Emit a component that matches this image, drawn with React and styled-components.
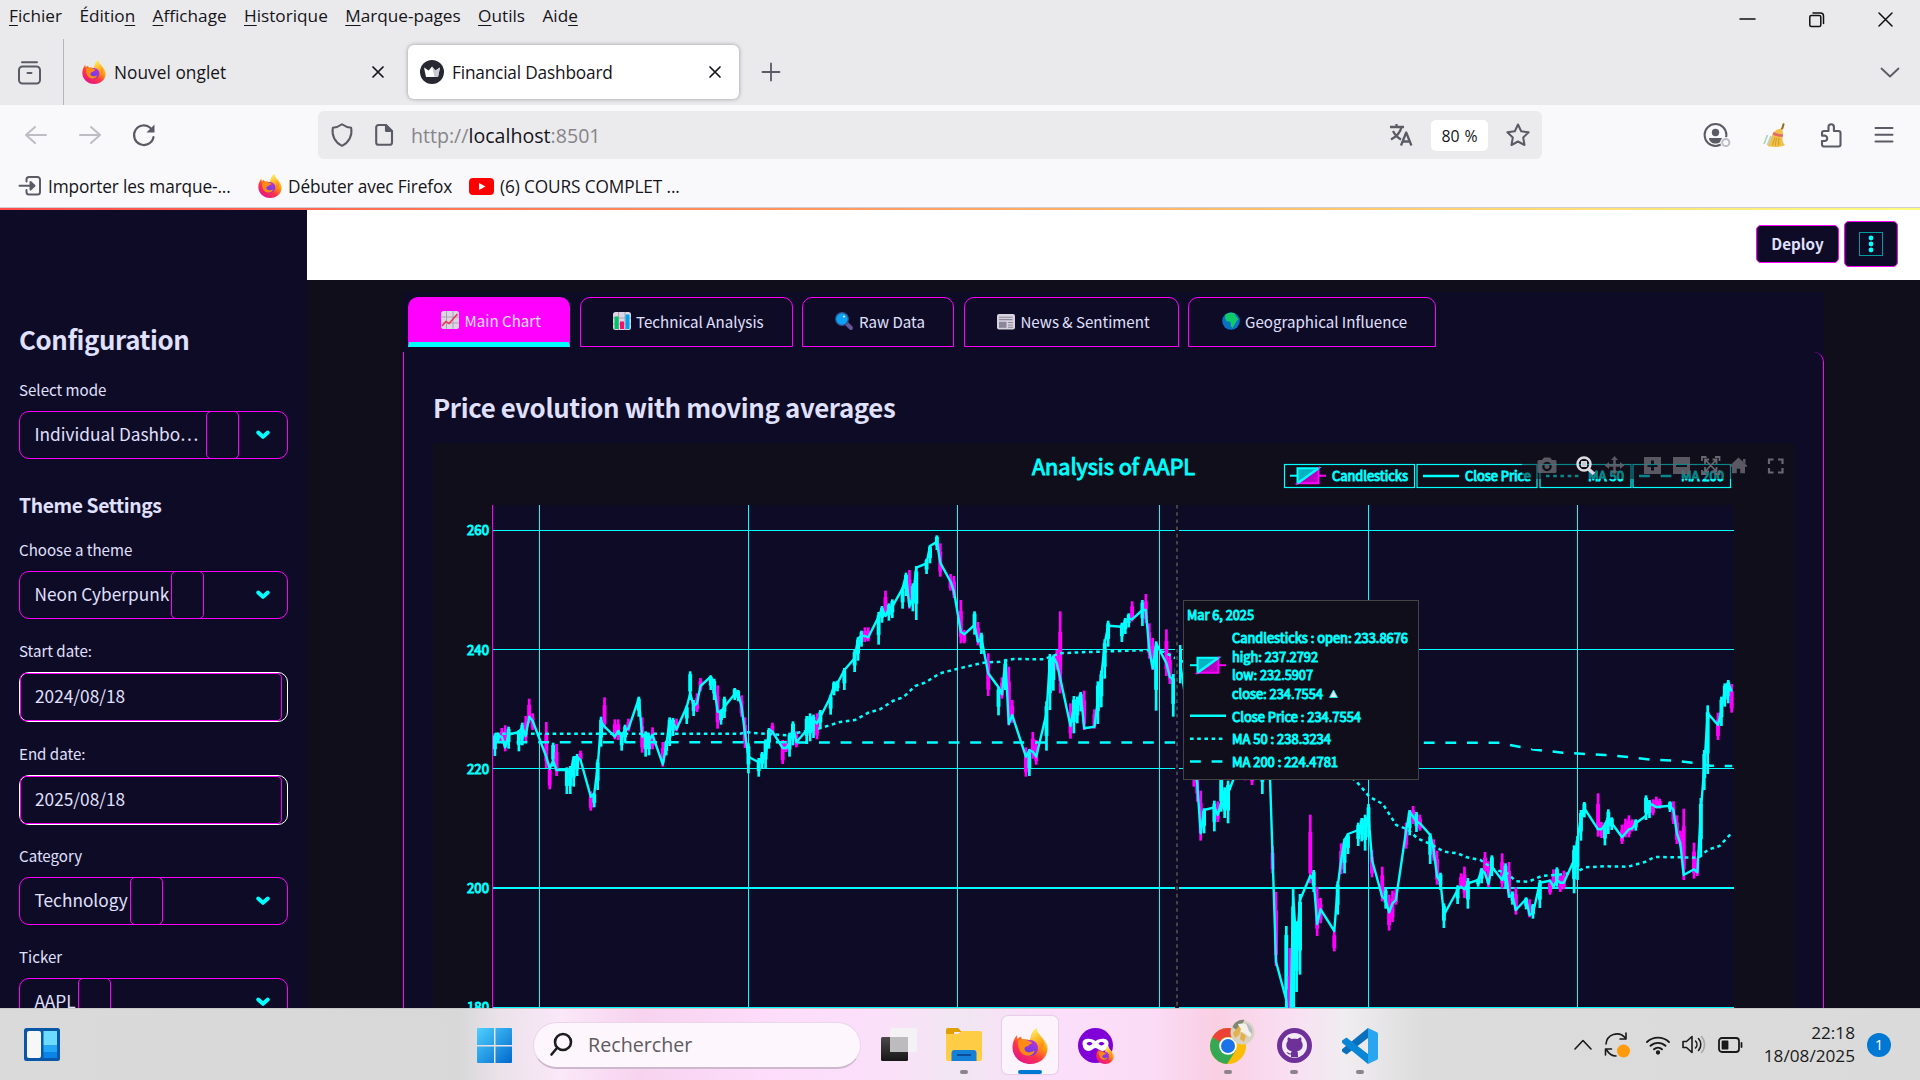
import React from "react";
import styled, { createGlobalStyle, css } from "styled-components";

const UI = '"Open Sans", "Noto Sans", sans-serif';
const APP = '"Noto Sans CJK SC", "Noto Sans", sans-serif';
const CYAN = "#00ffff";
const PINK = "#ff00ff";
const NAVY = "#0e0b26";
const DARK = "#100e1a";
const LAVENDER = "#e0e0ff";

const Global = createGlobalStyle`
  *{box-sizing:border-box}
  html,body{margin:0;padding:0;overflow:hidden;background:${DARK}}
  svg{display:block;flex:none;overflow:visible}
`;

const Screen = styled.div`
  width: 1920px;
  height: 1080px;
  display: flex;
  flex-direction: column;
  overflow: hidden;
  font-family: ${UI};
`;

/* ---------- browser chrome ---------- */
const TitleArea = styled.header`
  height: 105px;
  background: #eaeaec;
  display: flex;
  flex-direction: column;
`;
const MenuRow = styled.div`
  height: 39px;
  display: flex;
  justify-content: space-between;
`;
const Menus = styled.nav`
  display: flex;
  gap: 17.4px;
  padding: 2px 0 0 9px;
  font-size: 17.2px;
  line-height: 27px;
  height: 29px;
  color: #15141a;
`;
const Menu = styled.span`
  white-space: pre;
  u {
    text-underline-offset: 3px;
    text-decoration-thickness: 1px;
  }
`;
const WindowButtons = styled.div`
  display: flex;
  gap: 54px;
  padding: 12px 27px 0 0;
`;
const TabStrip = styled.div`
  height: 66px;
  display: flex;
  align-items: center;
`;
const RecentButton = styled.div`
  width: 64px;
  height: 66px;
  padding: 21px 0 0 17px;
  border-right: 1px solid #b5b5ba;
`;
const BrowserTab = styled.div`
  width: ${(p) => (p.$active ? 331 : 338)}px;
  height: 54px;
  display: flex;
  align-items: center;
  margin-left: ${(p) => (p.$active ? 6 : 0)}px;
  padding: 0 18px 0 ${(p) => (p.$active ? 12 : 18)}px;
  border-radius: 6px;
  font-size: 17.25px;
  letter-spacing: ${(p) => (p.$active ? -0.18 : 0.05)}px;
  color: #15141a;
  ${(p) =>
    p.$active &&
    css`
      background: #fff;
      box-shadow: 0 0 4px rgba(0, 0, 0, 0.35);
    `}
`;
const TabTitle = styled.span`
  flex: 1;
  margin-left: 8px;
  white-space: nowrap;
`;
const NewTab = styled.div`
  margin-left: 23px;
  flex: 1;
`;
const AllTabs = styled.div`
  margin-right: 20px;
`;
const NavBar = styled.div`
  height: 60px;
  background: #f9f9fb;
  display: flex;
  align-items: center;
  padding: 0 26px 0 24px;
`;
const NavButtons = styled.div`
  display: flex;
  gap: 30px;
  width: 294px;
`;
const UrlBar = styled.div`
  width: 1224px;
  height: 48px;
  border-radius: 6px;
  background: #ebebed;
  display: flex;
  align-items: center;
  padding: 0 12px 0 13px;
`;
const DocSlot = styled.span`
  margin-left: 22px;
`;
const Url = styled.span`
  flex: 1;
  margin-left: 18px;
  padding-top: 1px;
  font-size: 19.6px;
  color: #85858a;
  b {
    font-weight: 400;
    color: #15141a;
  }
`;
const ZoomPill = styled.span`
  width: 57px;
  height: 31px;
  margin: 0 18px 0 18px;
  border-radius: 5px;
  background: #fff;
  color: #15141a;
  font-size: 15.8px;
  line-height: 32px;
  word-spacing: 1px;
  text-align: center;
`;
const NavTools = styled.div`
  flex: 1;
  display: flex;
  justify-content: flex-end;
  align-items: center;
  gap: 32px;
`;
const BookmarkBar = styled.div`
  height: 43px;
  background: #f9f9fb;
  border-bottom: 1px solid #cfcfd6;
  display: flex;
  align-items: center;
  padding-left: 18px;
  font-size: 17.25px;
  letter-spacing: -0.12px;
  color: #15141a;
`;
const Bookmark = styled.div`
  display: flex;
  align-items: center;
  gap: 6px;
  width: ${(p) => p.$w}px;
  white-space: nowrap;
`;

/* ---------- app ---------- */
const Decoration = styled.div`
  height: 2px;
  background: linear-gradient(90deg, #ff4b4b, #fffd80);
`;
const AppBody = styled.div`
  height: 798px;
  display: flex;
  overflow: hidden;
  font-family: ${APP};
  color: ${LAVENDER};
`;
const Sidebar = styled.aside`
  width: 307px;
  height: 798px;
  overflow: hidden;
  background: ${NAVY};
  padding: 111px 19px 0;
`;
const SideTitle = styled.h2`
  margin: 0 0 21px 0;
  height: 36px;
  font-size: 25.8px;
  line-height: 36px;
  font-weight: 600;
  letter-spacing: -0.4px;
`;
const SideSubtitle = styled.h3`
  margin: 31px 0 20px;
  height: 28px;
  font-size: 19.3px;
  line-height: 30px;
  font-weight: 600;
  letter-spacing: -0.38px;
`;
const Field = styled.div`
  margin-bottom: ${(p) => p.$after ?? 20}px;
`;
const Label = styled.label`
  display: block;
  height: 24px;
  margin-bottom: 9px;
  line-height: 23px;
  font-size: 15.1px;
`;
const SelectBox = styled.div`
  width: 269px;
  height: 48px;
  display: flex;
  align-items: center;
  border: 1px solid ${PINK};
  border-radius: 10px;
  padding-right: 17px;
`;
const SelectText = styled.span`
  width: ${(p) => p.$w}px;
  padding: 0 0 2px 14.5px;
  font-size: 17.25px;
  line-height: 30px;
  white-space: nowrap;
`;
const SelectCaret = styled.span`
  width: 33px;
  height: 48px;
  flex: none;
  margin: -1px auto -1px 0;
  border: 1px solid ${PINK};
  border-radius: 5px;
`;
const DateBox = styled.div`
  width: 269px;
  height: 50px;
  border: 1px solid #fff;
  border-radius: 10px;
  padding-right: 5px;
`;
const DateInput = styled.div`
  height: 48px;
  border: 1px solid ${PINK};
  border-radius: 5px;
  padding: 0 0 0 14px;
  font-size: 17.25px;
  line-height: 44px;
`;
const Main = styled.main`
  flex: 1;
  background: ${DARK};
  display: flex;
  flex-direction: column;
`;
const AppHeader = styled.div`
  height: 70px;
  flex: none;
  background: #fff;
  display: flex;
  justify-content: flex-end;
  align-items: center;
  gap: 5px;
  padding: 0 22px 2px 0;
`;
const HeaderButton = styled.div`
  width: ${(p) => p.$w}px;
  height: ${(p) => p.$h}px;
  display: flex;
  align-items: center;
  justify-content: center;
  background: ${NAVY};
  border: 1.5px solid ${PINK};
  border-radius: 5px;
  font-size: 15.2px;
  line-height: 20px;
  font-weight: 700;
  padding-bottom: ${(p) => (p.$icon ? 0 : 2)}px;
`;
const Block = styled.section`
  width: 1421px;
  margin: 12px 0 0 96px;
  padding-top: 5px;
  background: ${NAVY};
`;
const TabList = styled.div`
  display: flex;
  gap: 9.6px;
  padding-left: 5px;
  height: 55px;
`;
const AppTab = styled.div`
  width: ${(p) => p.$w}px;
  height: 50px;
  flex: none;
  display: flex;
  align-items: center;
  justify-content: center;
  gap: 5.5px;
  border: 1px solid ${PINK};
  border-radius: 10px 10px 0 0;
  font-size: 15.1px;
  line-height: 20px;
  white-space: nowrap;
  padding: 0 0 2px 4px;
  ${(p) =>
    p.$active &&
    css`
      background: ${PINK};
      border-bottom: 5px solid ${CYAN};
      padding-bottom: 0;
    `}
`;
const Panel = styled.div`
  height: 656px;
  border: 1px solid ${PINK};
  border-top: 0;
  border-bottom: 0;
  border-radius: 0 10px 0 0;
  padding: 37px 0 0 29px;
`;
const PanelTitle = styled.h2`
  margin: 0;
  height: 54px;
  font-size: 25.8px;
  line-height: 36px;
  font-weight: 600;
  letter-spacing: -0.36px;
  white-space: nowrap;
`;

/* ---------- taskbar ---------- */
const Taskbar = styled.footer`
  height: 72px;
  display: flex;
  align-items: center;
  border-top: 1px solid #cbc8c9;
  background: linear-gradient(
    90deg,
    #dadada 0,
    #d8d8d8 460px,
    #ebe2ea 500px,
    #fae8f8 560px,
    #f7d3ef 640px,
    #fcdcfa 760px,
    #fbe0fa 880px,
    #f1e6f1 960px,
    #fbdffa 1040px,
    #fbdcf7 1150px,
    #f9cfe3 1215px,
    #f9dff3 1290px,
    #f0edf0 1345px,
    #dcdcdc 1425px,
    #dadada 1920px
  );
`;
const TaskSlot = styled.div`
  width: ${(p) => p.$w}px;
  height: 71px;
  flex: none;
  display: flex;
  flex-direction: column;
  align-items: center;
  padding-top: ${(p) => p.$top ?? 19}px;
`;
const ActiveTile = styled.div`
  width: 56px;
  height: 58px;
  display: flex;
  flex-direction: column;
  align-items: center;
  justify-content: space-between;
  padding-top: 12px;
  border-radius: 6px;
  background: #fdf3fd;
  box-shadow: 0 0 1px 1px rgba(120, 90, 120, 0.14);
`;
const Indicator = styled.span`
  width: ${(p) => (p.$active ? 24 : 8)}px;
  height: ${(p) => (p.$active ? 4 : 4)}px;
  margin-top: ${(p) => (p.$active ? 0 : "auto")};
  margin-bottom: ${(p) => (p.$active ? 0 : 6)}px;
  border-radius: 3px;
  background: ${(p) => (p.$active ? "#0078d4" : "#8b848c")};
`;
const Search = styled.div`
  width: 328px;
  height: 47px;
  flex: none;
  display: flex;
  align-items: center;
  gap: 16px;
  margin: 1px 5px 0 10px;
  padding: 0 0 0 16px;
  border-radius: 24px;
  border: 1px solid #ead6ea;
  border-bottom: 2px solid #cdb9cd;
  background: #fdf6fd;
  font-size: 19.7px;
  color: #5f5b60;
`;
const Tray = styled.div`
  flex: 1;
  display: flex;
  justify-content: flex-end;
  align-items: center;
  gap: 12px;
  padding-right: 29px;
`;
const WifiSlot = styled.span`
  margin-left: 4px;
`;
const Clock = styled.div`
  width: 100px;
  padding-bottom: 2px;
  text-align: right;
  font-size: 17.2px;
  line-height: 23px;
  color: #1a1a1a;
`;
const Notice = styled.span`
  width: 24px;
  height: 24px;
  border-radius: 50%;
  background: #0078d4;
  color: #fff;
  font-size: 15px;
  line-height: 23px;
  text-align: center;
`;

/* ---------- icons ---------- */
const Line = ({ w, h, c = "#5b5b66", s = 2, children, vb }) => (
  <svg width={w} height={h} viewBox={vb || `0 0 ${w} ${h}`} fill="none" stroke={c} strokeWidth={s} strokeLinecap="round" strokeLinejoin="round">
    {children}
  </svg>
);

const Firefox = ({ size, id }) => (
  <svg width={size} height={size} viewBox="0 0 36 36">
    <defs>
      <linearGradient id={`${id}a`} x1=".8" y1=".1" x2=".25" y2=".95">
        <stop offset="0" stopColor="#fff44f" />
        <stop offset=".35" stopColor="#ff980e" />
        <stop offset=".65" stopColor="#ff3647" />
        <stop offset="1" stopColor="#e31587" />
      </linearGradient>
      <linearGradient id={`${id}b`} x1=".7" y1="0" x2=".3" y2="1">
        <stop offset="0" stopColor="#b833e1" />
        <stop offset="1" stopColor="#5b3ee0" />
      </linearGradient>
      <linearGradient id={`${id}c`} x1=".3" y1="0" x2=".6" y2="1">
        <stop offset="0" stopColor="#fff36a" />
        <stop offset=".6" stopColor="#ffb01f" />
        <stop offset="1" stopColor="#ff7a1a" />
      </linearGradient>
    </defs>
    <path fill={`url(#${id}a)`} d="M5.2 6.8C5 8.6 5.100 9.500 5.600 11 6.600 9.900 7.500 9.200 9 8.500c.2 1.300.8 2.200 1.800 3 3-.6 5.200-.3 7.500 1C18.500 8 20 3.500 24.500 0c.2 4 2.500 6.300 5.200 9.500C33 13 35.500 16 35.500 21 35 29.500 28 36 18.500 36 8 36 .5 28.500.5 19.500.5 14.500 2.200 10.400 5.200 6.800z" />
    <path fill={`url(#${id}c)`} d="M24.500 0c-3.800 3-5.500 7-5.800 12 4.800 2.200 7.300 5.500 7.500 10.500C31 20 33.500 16.500 31.500 12 30 8 25 5.500 24.500 0z" />
    <circle cx="18" cy="20" r="8" fill={`url(#${id}b)`} />
    <path fill="#ff8a16" d="M6 13c3-2.500 7-2.300 9.500-.2 2 .2 3.800 1 4.800 2.400-1.500.2-2.600 1-3.400 2-1.200 1.400-3.700.8-4.300 3-.4 2 1.600 4.200 4.600 4.200 2.600 0 3.600-1.700 5.400-1.200-1 3.600-5.400 5.300-9.200 4C8 25.500 5.500 20 6 13z" />
  </svg>
);

const Recent = () => (
  <Line w={25} h={25}>
    <path d="M5 2.200h15" />
    <rect x="2" y="6.500" width="21" height="17" rx="3.500" />
    <path d="M10.500 13h4" />
  </Line>
);
const Cross = ({ size = 12, s = 1.7, c = "#15141a" }) => (
  <Line w={size} h={size} c={c} s={s}>
    <path d={`M1 1L${size - 1} ${size - 1}M${size - 1} 1L1 ${size - 1}`} />
  </Line>
);
const Crown = () => (
  <svg width="24" height="24" viewBox="0 0 24 24">
    <circle cx="12" cy="12" r="12" fill="#262730" />
    <path d="M4 7.500l4.700 3L12 6.500l3.300 4 4.700-3-2 9.500H6z" fill="#fff" />
    <path d="M12 6.500l3.300 4 4.700-3-2 9.500h-3.500z" fill="#c9c9cf" />
  </svg>
);
const Arrow = ({ flip }) => (
  <svg width="24" height="24" viewBox="0 0 24 24" fill="none" stroke="#bdbdc4" strokeWidth="2" strokeLinecap="round" strokeLinejoin="round">
    <path d={flip ? "M2 12h20M13 4l9 8-9 8" : "M22 12H2M11 4l-9 8 9 8"} />
  </svg>
);
const Reload = () => (
  <svg width="24" height="24" viewBox="0 0 24 24" fill="none" stroke="#5b5b66" strokeWidth="2.200" strokeLinecap="round">
    <path d="M21.500 14a9.800 9.800 0 1 1-3-9" />
    <path d="M22.500 1.500v8h-8z" fill="#5b5b66" stroke="none" />
  </svg>
);
const Shield = () => (
  <Line w={22} h={24}>
    <path d="M11 1.200c3 2.200 6 3.300 9.200 3.600C21.500 12.500 18 19.500 11 22.800 4 19.500.5 12.500 1.800 4.800 5 4.500 8 3.400 11 1.200z" />
  </Line>
);
const Doc = () => (
  <Line w={18} h={22} s={2.100}>
    <path d="M3.500 1H11l6 6v11.500a2.300 2.300 0 0 1-2.300 2.300H3.500a2.300 2.300 0 0 1-2.300-2.300v-15A2.300 2.300 0 0 1 3.500 1z" />
    <path d="M11 1.500V7h5.500z" fill="#5b5b66" />
  </Line>
);
const Translate = () => (
  <Line w={24} h={24} s={2.300}>
    <path d="M1 4h14M7.500 1v3M4 8c2 4 5 7 8 8.500M12.500 4c-1 5-5 9.500-10.500 12.500M12 22.500l5.200-13 5.200 13M13.800 18.500h6.800" strokeLinecap="butt" />
  </Line>
);
const Star = () => (
  <Line w={24} h={24}>
    <path d="M12 1.500l3.200 6.800 7.400 1-5.400 5.200 1.300 7.500L12 18.500 5.500 22l1.300-7.500L1.400 9.300l7.400-1z" />
  </Line>
);
const Account = () => (
  <svg width="28" height="25" viewBox="0 0 28 25">
    <circle cx="12.500" cy="12" r="10.900" fill="none" stroke="#5b5b66" strokeWidth="2" />
    <circle cx="12.500" cy="9.500" r="3.700" fill="#5b5b66" />
    <path d="M6 15h13c0 3.500-3 5.500-6.500 5.500S6 18.500 6 15z" fill="#5b5b66" />
    <circle cx="22.800" cy="19.500" r="5.500" fill="#f9f9fb" />
    <circle cx="22.800" cy="19.500" r="3.600" fill="none" stroke="#bdbdc4" strokeWidth="2" />
  </svg>
);
const Broom = () => (
  <svg width="25" height="25" viewBox="0 0 25 25">
    <path d="M20.500 1.200l-1 3.500-3.500 5" fill="none" stroke="#9a6a22" strokeWidth="2" strokeLinecap="round" />
    <path d="M10.500 9.500c2-2.500 5-4 8-3.500 2 2.500 1.500 6 1 9-.3 2.500.5 5 2.500 7-3.500 2.200-11 2.500-17.500 1 2.500-3.500 3.500-9 6-13.500z" fill="#f0c04a" />
    <path d="M9.500 11.500c3.500 2 7 2.500 10.300 2.200l.3-2.400c-3.500 0-6.800-.6-9.500-2.200z" fill="#e26a6a" />
    <path d="M12 14.500L9.500 22M16 15l-.5 7.500M13.500 15l-1.200 7.500" stroke="#cf9526" strokeWidth=".9" />
    <path d="M1 21L4.500 12M4.500 22L8 13" stroke="#b5d3bd" strokeWidth="1.800" />
  </svg>
);
const Puzzle = () => (
  <Line w={22} h={25} s={2.100}>
    <path d="M4 8h4.500V4a2.700 2.700 0 0 1 5.400 0v4h4.600a2 2 0 0 1 2 2v11.500a2 2 0 0 1-2 2H4a2 2 0 0 1-2-2V18h2.500a2.700 2.700 0 0 0 0-5.400H2V10a2 2 0 0 1 2-2z" />
  </Line>
);
const ImportIcon = () => (
  <Line w={24} h={20}>
    <path d="M8.500 5.500V3.500A2.500 2.500 0 0 1 11 1h8.500A2.500 2.500 0 0 1 22 3.500v12.500a2.500 2.500 0 0 1-2.500 2.500H11a2.500 2.500 0 0 1-2.500-2.500v-2M1.500 9.800H16" />
    <path d="M12.500 6l4 3.800-4 3.800z" fill="#5b5b66" />
  </Line>
);
const YouTube = () => (
  <svg width="25" height="17" viewBox="0 0 25 17">
    <rect width="25" height="17" rx="4" fill="#f00" />
    <path d="M10 5l6.500 3.500L10 12z" fill="#fff" />
  </svg>
);
const Chevron = () => (
  <Line w={14} h={10} c={CYAN} s={4}>
    <path d="M2.200 2.500L7 6.800l4.800-4.300" />
  </Line>
);

const TabIcon = ({ kind }) => {
  const grid = (
    <>
      <rect x="0" y="0" width="18" height="18" rx="2.500" fill="#dcd6e4" />
      <path d="M5.500 0v18M12 0v18M0 6h18M0 12h18" stroke="#a9a2b5" strokeWidth="1" />
    </>
  );
  return (
    <svg width="18" height="18" viewBox="0 0 18 18">
      {kind === "line" && (
        <>
          {grid}
          <path d="M1 15l4-4.500 3 2L16.500 3" fill="none" stroke="#f0304f" strokeWidth="1.500" />
        </>
      )}
      {kind === "bars" && (
        <>
          {grid}
          <path fill="#00c463" d="M1.500 4.500h4V17h-4z" />
          <path fill="#f2126e" d="M7 9.500h4V17H7z" />
          <path fill="#00a3ee" d="M12.500 2.500h4V17h-4z" />
        </>
      )}
      {kind === "search" && (
        <>
          <path d="M11.500 11.500l4.500 4.500" stroke="#65569a" strokeWidth="4" strokeLinecap="round" />
          <circle cx="7" cy="7" r="6.300" fill="#0aa2f5" stroke="#37508f" strokeWidth="1.200" />
          <circle cx="9" cy="4.500" r="1.100" fill="#d7f0ff" />
        </>
      )}
      {kind === "news" && (
        <>
          <rect x="0" y="2" width="18" height="15.500" rx="2" fill="#d7d2de" />
          <path d="M2 5.200h13.500M2 7.600h13.500M11 10.500h5M11 13h5M11 15.300h5" stroke="#8d8699" strokeWidth="1.100" />
          <rect x="2" y="9.800" width="7.500" height="6" fill="#8d8699" />
        </>
      )}
      {kind === "globe" && (
        <>
          <circle cx="9" cy="9" r="8.800" fill="#0871c4" />
          <path d="M3.500 2.500C6 .5 10 .2 12.500 1.200l1.500 3.300 2.500 2.500-2 2-1.500 3-2.500 4-1.500-1.500-.5-4.500-4-1L3 6z" fill="#10c967" />
        </>
      )}
    </svg>
  );
};

/* ---------- chart ---------- */
// Columns: day offset, close, high, low, rising. Heights are thirds of a pixel below the base line of the block.
const FIRST = [
[0,718,700,768,1],[1,708,698,728,1],[2,710,684,730,0],[3,742,676,754,0],[4,704,680,746,1],[7,696,690,754,1],[8,682,668,736,1],[9,708,648,724,0],[10,650,596,670,0],[11,662,640,690,0],[15,770,666,804,0],[16,806,790,868,0],[17,782,728,800,1],[18,810,732,828,0],[21,810,802,882,1],[22,822,798,882,1],[23,772,770,860,1],[24,772,762,828,1],[25,780,752,782,0],[28,890,874,932,0],[29,880,878,922,1],[30,800,778,870,1],[31,665,650,740,1],[32,680,592,686,0],[35,710,658,718,0],[36,692,658,720,0],[37,705,698,752,1],[38,690,674,728,1],[39,686,656,694,0],[42,595,590,650,1],[43,710,652,758,0],[44,702,694,770,1],[45,720,704,766,1],[46,705,682,748,0],[49,793,726,800,0],[50,740,722,766,1],[51,660,652,738,1],[52,668,654,708,1],[53,688,656,694,0],[56,620,616,672,1],[57,580,514,600,1],[58,618,600,648,1],[59,610,580,636,0],[60,558,534,574,0],[63,530,526,570,1],[64,560,536,600,1],[65,635,556,686,0],[66,635,628,674,1],[67,620,590,654,1],[70,582,564,600,1],[71,578,570,604,1],[72,620,586,650,0],[73,700,652,744,0],[74,770,730,820,1],[77,787,774,830,1],[78,775,756,806,1],[79,775,718,804,1],[80,688,684,746,1],[81,695,668,706,0],[84,744,720,792,0],[85,744,722,756,0],[86,730,698,770,1],[87,680,664,736,1],[88,727,694,742,0],[91,690,648,732,1],[92,675,640,724,1],[93,660,644,714,1],[94,670,640,718,0],[95,650,630,684,1],[98,590,584,644,1],[99,555,544,586,1],[100,550,542,574,1],[102,510,504,570,1],[105,475,450,516,1],[106,415,412,482,1],[107,408,392,440,1],[108,408,382,426,0],[109,412,382,424,0],[112,350,336,434,1],[113,325,318,368,1],[114,348,272,350,0],[115,325,310,362,1],[116,320,298,354,1],[119,265,262,326,1],[120,225,218,288,1],[121,320,210,326,0],[122,290,250,334,1],[123,203,198,360,1],[126,190,176,222,1],[127,138,136,190,1],[129,125,106,150,1],[130,188,130,230,0],[133,245,222,272,0],[134,275,228,294,0],[136,395,300,430,0],[137,403,390,430,0],[140,375,334,404,1],[141,425,366,436,0],[142,415,398,462,1],[144,520,460,588,0],[147,562,560,646,1],[148,583,532,596,0],[149,480,482,570,1],[150,672,500,676,0],[151,645,600,668,0],[155,770,742,830,0],[156,750,748,828,1],[157,755,696,776,0],[158,770,720,794,0],[161,640,604,752,1],[162,480,462,630,1],[163,470,466,572,1],[164,490,450,510,0],[165,535,334,580,0],[168,678,610,716,0],[169,620,588,700,1],[170,610,590,670,1],[171,580,576,634,1],[172,685,572,690,0],[175,680,628,686,0],[176,600,544,672,1],[177,530,512,622,1],[178,430,418,536,1],[179,377,362,440,1],[183,380,368,426,1],[184,365,354,402,1],[185,355,340,382,1],[186,358,304,364,0],[189,330,300,378,1],[190,330,282,370,0],[191,450,370,476,0],[192,505,414,510,0],[193,430,424,632,1],[196,490,388,528,0],[197,530,458,552,0],[198,540,522,650,1],[199,542,497,580,1],[200,490,435,550,1],[203,690,600,740,0],[204,800,690,860,0],[205,850,740,905,0],[206,1000,872,1022,0],[207,930,925,1000,1],[210,922,902,994,1],[211,945,904,966,0],[212,905,830,935,1],[213,930,862,954,1],[214,880,842,970,1],[217,800,770,835,1],[218,760,740,800,1],[219,790,740,841,0],[220,770,750,820,1],[221,835,780,855,0],[224,800,760,882,1],[225,790,770,820,1],[226,760,740,830,1],
];
const SECOND = [
[227,470,438,520,0],[228,785,576,798,0],[231,900,678,950,1],[232,1060,744,1080,0],[233,592,566,1100,1],[234,740,664,876,1],[235,600,582,824,1],[238,527,344,550,0],[239,540,510,576,1],[240,672,560,708,0],[241,628,594,670,0],[245,693,690,754,0],[246,560,544,644,1],[247,480,430,522,0],[248,420,416,520,1],[249,402,400,462,1],[252,390,368,438,1],[253,385,354,424,1],[254,370,344,452,1],[255,345,312,412,1],[256,480,450,532,0],[259,590,500,604,0],[260,600,566,626,1],[261,637,584,692,0],[262,610,572,666,0],[263,600,566,614,0],[266,390,368,446,0],[267,335,330,406,1],[268,350,318,372,0],[269,365,336,396,1],[270,370,344,392,0],[273,405,400,492,1],[274,450,418,482,0],[275,530,452,554,0],[276,545,518,570,1],[277,645,610,684,1],[281,570,556,612,1],[282,560,520,566,0],[283,568,500,594,0],[284,550,534,626,1],[287,540,536,560,1],[288,510,504,550,1],[289,520,456,524,0],[290,552,484,562,0],[291,500,466,528,1],[294,540,460,566,0],[295,510,490,566,1],[296,590,486,594,0],[297,585,574,614,1],[298,630,562,644,0],[301,597,592,628,1],[302,645,598,652,0],[303,640,612,656,1],[305,548,540,624,1],[308,542,538,584,0],[309,560,508,562,0],[310,540,502,560,1],[311,548,522,576,0],[312,548,512,568,0],[315,480,436,580,1],[316,420,408,540,1],[317,350,330,422,1],[318,325,306,352,1],[322,388,280,410,0],[323,388,366,414,0],[324,375,368,436,1],[325,350,328,402,1],[326,370,352,390,1],[329,412,374,432,0],[330,400,356,412,0],[331,388,346,412,0],[332,385,358,394,0],[333,370,358,392,1],[336,347,286,360,1],[337,312,300,354,1],[338,315,298,346,0],[339,322,290,324,0],[340,320,296,326,0],[343,317,304,336,1],[344,330,304,372,0],[345,400,346,432,0],[346,430,392,440,0],[347,525,326,540,0],[350,508,428,536,0],[351,517,474,528,0],[352,330,294,470,1],[353,200,150,270,1],[354,40,16,222,1],[357,75,38,120,0],[358,30,-10,78,1],[359,-30,-50,20,1],[360,-52,-60,10,1],[361,-25,-48,38,0],
];
const scale = (rows, base) =>
  rows.map(([d, c, h, l, up]) => ({
    x: 494.9 + d * 3.426,
    c: base + c / 3,
    h: base + h / 3,
    l: base + l / 3,
    up,
  }));
const CANDLES = [...scale(FIRST, 500), ...scale(SECOND, 700)];
const CLOSE = CANDLES.map((k) => `${k.x.toFixed(1)},${k.c.toFixed(1)}`).join(" ");

const MA50 =
  "495,733.700 740,733.700 746.700,732.300 766.700,734 786.700,735.300 800,732.300 820,728.300 840,722 855,720 868.300,712.700 880,709.300 893.300,700.700 903.300,697.300 915,686 925,682.700 940,673.300 956.700,669 983.300,662.700 1000,661.700 1013.300,659 1043.300,659.300 1060,653.300 1080,652.300 1110,651.300 1146.700,650 1163.300,651.700 1175,658 1220,678 1280,720 1330,762 1356,781 1369.400,796.700 1382.800,804 1396.200,825 1407.700,829.300 1417.300,838.300 1428.800,843.300 1444,851.700 1457.500,853.300 1467,857.300 1480.400,860 1493.800,869.300 1507.200,873.300 1516,881.300 1528.300,881.700 1541.700,876 1562.700,874.300 1576,872 1585.700,867.300 1604.800,866.300 1627.800,866.700 1645,862 1654.500,857 1681.300,857.300 1698.600,857.700 1708,849.700 1719.600,846 1732.200,832.300";
const MA200 =
  "495,742.200 1499.600,742.800 1510,745 1532,749.300 1562.700,752.700 1604.800,755 1627.800,757 1650.700,759.700 1673.700,760.700 1696.700,763.300 1710,765.700 1732.200,766";

const CText = styled.text`
  font-family: ${APP};
  font-size: ${(p) => p.$s}px;
  fill: ${CYAN};
  stroke: ${CYAN};
  stroke-width: ${(p) => p.$k ?? 0.95}px;
`;
const T = ({ x, y, w, s = 13.2, k, children }) => (
  <CText x={x} y={y} $s={s} $k={k} textLength={w} lengthAdjust="spacingAndGlyphs">
    {children}
  </CText>
);

const CandleKey = ({ x, y, w = 21, h = 15 }) => (
  <g transform={`translate(${x} ${y})`} strokeWidth="2">
    <path d="M0 0H7.500" stroke={CYAN} />
    <path d="M28 0H36" stroke={PINK} />
    <path d={`M7.500 ${h / 2}V${-h / 2}H${7.5 + w}z`} fill="#00b4c0" stroke={CYAN} />
    <path d={`M${7.5 + w} ${-h / 2}V${h / 2}H7.500z`} fill="#b400c0" stroke={PINK} />
    <path d={`M7.500 ${h / 2}L${7.5 + w} ${-h / 2}`} stroke={CYAN} strokeWidth="2.500" />
  </g>
);

const Modebar = () => (
  <g>
    <rect x="1522" y="455" width="210" height="24" fill={DARK} opacity=".5" />
    <g fill="#68666f" stroke="none" opacity=".85">
      <path fillRule="evenodd" d="M1542 460l2-2.500h6l2 2.500h3a1.500 1.500 0 0 1 1.500 1.500v10a1.500 1.500 0 0 1-1.500 1.500h-16a1.500 1.500 0 0 1-1.500-1.500v-10a1.500 1.500 0 0 1 1.500-1.500zm5 1.800a4.700 4.700 0 1 0 .01 0zm0 2.200a2.500 2.500 0 1 1-.01 0z" />
      <path fillRule="evenodd" d="M1644 457h17v17h-17zm7 3.500v3.500h-3.500v3h3.500v3.500h3V467h3.500v-3h-3.500v-3.500z" />
      <path fillRule="evenodd" d="M1673 457h17v17h-17zm3 7v3h11v-3z" />
      <path d="M1729.500 466l9-8.500 9 8.500-1.500 1.200-1-1v7h-4.800v-4.500h-3.400v4.500h-4.800v-7l-1 1z" />
      <path d="M1743 459h2.500v5l-2.500-2.300z" />
      <path d="M1614.500 456l3.500 4h-2.200v4.200h4.200V462l4.300 3.500-4.300 3.500v-2.300h-4.200v4.200h2.200l-3.500 4-3.500-4h2.200v-4.200h-4.200v2.300l-4.300-3.500 4.300-3.500v2.200h4.200V460h-2.200z" />
    </g>
    <g stroke="#dddce0" fill="none">
      <circle cx="1584" cy="464" r="6.500" strokeWidth="2.500" />
      <path d="M1588.500 469l5.500 5" strokeWidth="3.500" />
      <path d="M1581.500 461.500h5v5h-5z" fill="#c9c8ce" strokeWidth="1" />
    </g>
    <g stroke="#68666f" fill="none" strokeWidth="1.800">
      <path d="M1702 461v-4h4.500M1715 457h4.500v4M1719.500 470v4h-4.500M1706.500 474h-4.500v-4" />
      <path d="M1705.500 460l10.500 11M1716 460l-10.500 11M1705 464v-4.500h4M1712.500 459.500h4v4.500M1716.500 467v4.500h-4M1709 471.500h-4V467" />
      <path d="M1769 464v-4.500h4.500M1778 459.500h4.500v4.500M1782.500 468v4.500h-4.500M1773.500 472.500H1769V468" strokeWidth="2.200" />
    </g>
  </g>
);

const LegendBox = ({ x, w }) => <rect x={x} y="464.500" width={w} height="23" fill={DARK} stroke={CYAN} strokeWidth="1.200" />;

const ChartCanvas = styled.svg`
  && {
    overflow: hidden;
  }
`;

const Chart = () => (
  <ChartCanvas width="1361" height="565" viewBox="433 443 1361 565">
    <rect x="433" y="443" width="1361" height="565" fill={DARK} />
    <rect x="492" y="505" width="1242" height="503" fill={NAVY} />
    <g stroke={CYAN} shapeRendering="crispEdges">
      {[539.5, 748.5, 957.5, 1159.5, 1368.5, 1577.5].map((x) => (
        <path key={x} d={`M${x} 505V1008`} />
      ))}
      {[530.5, 649.5, 768.5, 1007.5].map((y) => (
        <path key={y} d={`M493 ${y}H1734`} />
      ))}
      <path d="M493 888H1734" strokeWidth="2" />
    </g>
    <path d="M492.500 505V1008" stroke={PINK} shapeRendering="crispEdges" />
    {CANDLES.map((k) => {
      const color = k.up ? CYAN : PINK;
      const span = k.l - k.h;
      const top = k.up ? k.h + span * 0.1 : k.h + span * 0.25;
      const bottom = k.up ? k.l - span * 0.3 : k.l - span * 0.15;
      return (
        <g key={k.x} stroke={color}>
          <path d={`M${k.x} ${k.h}V${k.l}`} strokeWidth="2.700" />
          <path d={`M${k.x} ${top}V${bottom}`} strokeWidth="3.900" />
        </g>
      );
    })}
    <polyline points={CLOSE} fill="none" stroke={CYAN} strokeWidth="2.400" strokeLinejoin="round" />
    <polyline points={MA50} fill="none" stroke={CYAN} strokeWidth="2.500" strokeDasharray="3.600 3.600" />
    <polyline points={MA200} fill="none" stroke={CYAN} strokeWidth="2.500" strokeDasharray="10.800 10.800" />
    <path d="M1177 505V1008" stroke={NAVY} strokeWidth="4" />
    <path d="M1177 505V1008" stroke="#4a4a4a" strokeWidth="1.800" strokeDasharray="3.600 3.600" />

    <T x={467} y={535} w={22}>260</T>
    <T x={467} y={655} w={22}>240</T>
    <T x={467} y={774} w={22}>220</T>
    <T x={467} y={893} w={22}>200</T>
    <T x={467} y={1012} w={22}>180</T>
    <T x={1032} y={475} w={163} s={22} k={0.95}>Analysis of AAPL</T>

    <LegendBox x={1284.5} w={130} />
    <LegendBox x={1417} w={120} />
    <LegendBox x={1540} w={91} />
    <LegendBox x={1633} w={97.5} />
    <CandleKey x={1290} y={475.7} />
    <T x={1332} y={481} w={76}>Candlesticks</T>
    <path d="M1423 476H1459" stroke={CYAN} strokeWidth="2.500" />
    <T x={1465} y={481} w={66}>Close Price</T>
    <path d="M1546 476H1582" stroke={CYAN} strokeWidth="2.500" strokeDasharray="3.600 3.600" />
    <T x={1588} y={481} w={36}>MA 50</T>
    <path d="M1639 476H1675" stroke={CYAN} strokeWidth="2.500" strokeDasharray="10.800 10.800" />
    <T x={1681} y={481} w={43}>MA 200</T>
    <Modebar />

    <rect x="1183.500" y="600.500" width="235" height="179" fill={DARK} stroke="#444" />
    <T x={1187} y={620} w={67}>Mar 6, 2025</T>
    <CandleKey x={1190} y={665.2} />
    <T x={1232} y={643} w={176}>Candlesticks : open: 233.8676</T>
    <T x={1232} y={662} w={86}>high: 237.2792</T>
    <T x={1232} y={680} w={81}>low: 232.5907</T>
    <T x={1232} y={699} w={91}>close: 234.7554</T>
    <path d="M1329.500 697.500l4-7.500 4 7.500z" fill="#e8e4ff" stroke={CYAN} strokeWidth=".8" />
    <path d="M1190 715.700H1226" stroke={CYAN} strokeWidth="2.500" />
    <T x={1232} y={722} w={129}>Close Price : 234.7554</T>
    <path d="M1190 738.700H1226" stroke={CYAN} strokeWidth="2.500" strokeDasharray="3.600 3.600" />
    <T x={1232} y={744} w={99}>MA 50 : 238.3234</T>
    <path d="M1190 761.500H1226" stroke={CYAN} strokeWidth="2.500" strokeDasharray="10.800 10.800" />
    <T x={1232} y={767} w={106}>MA 200 : 224.4781</T>
  </ChartCanvas>
);

/* ---------- taskbar icons ---------- */
const Widgets = () => (
  <svg width="36" height="33" viewBox="0 0 36 33">
    <rect width="36" height="33" rx="2.500" fill="#0a57a8" />
    <rect x="3" y="3" width="14" height="27" rx="2" fill="#f7f7f7" />
    <path fill="#6bdcff" d="M19.500 3H33v14.500H19.500z" />
    <path fill="#22a7f7" d="M19.500 17.500H33v6.500H19.500z" />
    <path fill="#0a84e8" d="M19.500 24H33v6H19.500z" />
  </svg>
);
const WindowsLogo = () => (
  <svg width="35" height="35" viewBox="0 0 35 35">
    <defs>
      <linearGradient id="win" x1="0" y1="0" x2="1" y2="1">
        <stop offset="0" stopColor="#4fd0ff" />
        <stop offset="1" stopColor="#0069cc" />
      </linearGradient>
    </defs>
    <path fill="url(#win)" d="M1 0h16v17H0V1a1 1 0 0 1 1-1zm17.500 0H34a1 1 0 0 1 1 1v16H18.500zM0 18.500h17V35H1a1 1 0 0 1-1-1zm18.500 0H35V34a1 1 0 0 1-1 1H18.500z" />
  </svg>
);
const TaskView = () => (
  <svg width="36" height="33" viewBox="0 0 36 33">
    <defs>
      <linearGradient id="tv" x1="0" y1="0" x2="0" y2="1">
        <stop offset="0" stopColor="#4a4a4a" />
        <stop offset="1" stopColor="#161616" />
      </linearGradient>
    </defs>
    <rect x="0" y="9" width="27" height="24" rx="1.500" fill="url(#tv)" />
    <rect x="9" y="0" width="27" height="24" rx="1.500" fill="#f4f2f4" />
    <path d="M9 9h18v15H9z" fill="#bdbbbd" />
  </svg>
);
const Folder = () => (
  <svg width="36" height="33" viewBox="0 0 36 33">
    <path d="M0 2a2 2 0 0 1 2-2h10l4 4H8v5H0z" fill="#e0a000" />
    <path d="M0 6h12l4-3h18a2 2 0 0 1 2 2v26a2 2 0 0 1-2 2H2a2 2 0 0 1-2-2z" fill="#ffcd45" />
    <path d="M5.500 33v-8a3 3 0 0 1 3-3h19a3 3 0 0 1 3 3v8z" fill="#1580d8" />
    <path d="M11 27h14" stroke="#0a4f96" strokeWidth="2" />
  </svg>
);
const Private = () => (
  <svg width="36" height="36" viewBox="0 0 36 36">
    <circle cx="17.500" cy="17.500" r="17.500" fill="#8000d7" />
    <path fillRule="evenodd" fill="#fff" d="M4.500 15c0-5 8-5.500 13-2 5-3.500 13-3 13 2 0 5-2.500 8-6 8-3.500 0-4.500-3-7-3s-3.500 3-7 3c-3.500 0-6-3-6-8zm4 .5c1.500 2.500 4.500 2.500 6 0-1.500-2-4.500-2-6 0zm12 0c1.500 2.500 4.500 2.500 6 0-1.500-2-4.500-2-6 0z" />
    <g transform="translate(18 18)">
      <Firefox size={18} id="fp" />
    </g>
  </svg>
);
const Chrome = () => (
  <svg width="37" height="36" viewBox="0 0 37 36">
    <circle cx="18" cy="18" r="18" fill="#fbbc05" />
    <path d="M18 18L2.400 9A18 18 0 0 0 17 36l8.800-13.500z" fill="#34a853" />
    <path d="M2.400 9A18 18 0 0 1 33.600 9H18a9 9 0 0 0-8 5z" fill="#ea4335" />
    <circle cx="18" cy="18" r="8.800" fill="#fff" />
    <circle cx="18" cy="18" r="7" fill="#1a73e8" />
    <circle cx="32.500" cy="4.500" r="12" fill="#d9d2c2" />
    <path d="M22.500-1c2-5 7-8 12-7l-3 5-5 5z" fill="#7f8672" />
    <path d="M28-4c4-1 9-1 11 3 3 3 3 7 1 10-3-1-5-5-9-5z" fill="#f5f1e8" />
    <path d="M23 5l6-7 2 3-2 6-4 3zM31 4l5 4-2 6-4-3z" fill="#e3b04a" />
    <path d="M36-5c4 2 7 6 6 11l-3-3z" fill="#b4bac6" />
  </svg>
);
const GitHubDesktop = () => (
  <svg width="35" height="35" viewBox="0 0 35 35">
    <circle cx="17.500" cy="17.500" r="17.500" fill="#6e3199" />
    <circle cx="17.500" cy="17.500" r="12.500" fill="#f2eaf6" />
    <path fill="#6e3199" d="M11 9.500c1.500 0 2.500.7 3.500 1.500 2-.5 4-.5 6 0 1-.8 2-1.500 3.500-1.500.6 1.500.5 2.500.2 3.400 3 3.600 1.500 9.600-4 10.100.7 1 .8 2 .8 6.300h-7V26.500c-3 .6-3.500-1.500-4.500-2.500 2 0 2.500 1.800 4.500 1.300 0-1 .3-1.700.8-2.300-5.500-.5-7-6.500-4-10.100-.3-.9-.4-1.900.2-3.400z" />
  </svg>
);
const VSCode = () => (
  <svg width="36" height="36" viewBox="0 0 36 36">
    <path d="M26 0l9 4.200a2 2 0 0 1 1 1.800v24a2 2 0 0 1-1 1.800L26 36z" fill="#2aa5f0" />
    <path d="M26 0v10L4.500 26.500 0 23.500v-2.200z" fill="#0a6fbd" />
    <path d="M26 36V26L4.500 9.500 0 12.500v2.200z" fill="#0a86d6" />
  </svg>
);

const menus = [
  ["", "F", "ichier"],
  ["Éditio", "n", ""],
  ["", "A", "ffichage"],
  ["", "H", "istorique"],
  ["", "M", "arque-pages"],
  ["", "O", "utils"],
  ["Aid", "e", ""],
];
const appTabs = [
  ["line", "Main Chart", 162],
  ["bars", "Technical Analysis", 213],
  ["search", "Raw Data", 152],
  ["news", "News & Sentiment", 215],
  ["globe", "Geographical Influence", 248],
];

const Select = ({ label, value, w, after }) => (
  <Field $after={after}>
    <Label>{label}</Label>
    <SelectBox>
      <SelectText $w={w}>{value}</SelectText>
      <SelectCaret />
      <Chevron />
    </SelectBox>
  </Field>
);
const DateField = ({ label, value, after }) => (
  <Field $after={after}>
    <Label>{label}</Label>
    <DateBox>
      <DateInput>{value}</DateInput>
    </DateBox>
  </Field>
);

export default function App() {
  return (
    <Screen>
      <Global />
      <TitleArea>
        <MenuRow>
          <Menus>
            {menus.map(([a, b, c]) => (
              <Menu key={a + b + c}>
                {a}
                <u>{b}</u>
                {c}
              </Menu>
            ))}
          </Menus>
          <WindowButtons>
            <Line w={15} h={15} c="#111" s={1.500}>
              <path d="M0 7h15" />
            </Line>
            <Line w={15} h={15} c="#111" s={1.500}>
              <rect x=".8" y="3.500" width="11" height="11" rx="1.500" />
              <path d="M4 1h7.500a3 3 0 0 1 3 3v7.500" />
            </Line>
            <Cross size={15} s={1.500} c="#111" />
          </WindowButtons>
        </MenuRow>
        <TabStrip>
          <RecentButton>
            <Recent />
          </RecentButton>
          <BrowserTab>
            <Firefox size={24} id="f1" />
            <TabTitle>Nouvel onglet</TabTitle>
            <Cross />
          </BrowserTab>
          <BrowserTab $active>
            <Crown />
            <TabTitle>Financial Dashboard</TabTitle>
            <Cross />
          </BrowserTab>
          <NewTab>
            <Line w={18} h={18} s={1.800}>
              <path d="M9 .5v17M.5 9h17" />
            </Line>
          </NewTab>
          <AllTabs>
            <Line w={20} h={11} s={1.800}>
              <path d="M1.500 1.500L10 9.500l8.500-8" />
            </Line>
          </AllTabs>
        </TabStrip>
      </TitleArea>

      <NavBar>
        <NavButtons>
          <Arrow />
          <Arrow flip />
          <Reload />
        </NavButtons>
        <UrlBar>
          <Shield />
          <DocSlot>
            <Doc />
          </DocSlot>
          <Url>
            http://<b>localhost</b>:8501
          </Url>
          <Translate />
          <ZoomPill>80 %</ZoomPill>
          <Star />
        </UrlBar>
        <NavTools>
          <Account />
          <Broom />
          <Puzzle />
          <Line w={20} h={16}>
            <path d="M1.500 1h17M1.500 7.700h17M1.500 14.400h17" />
          </Line>
        </NavTools>
      </NavBar>
      <BookmarkBar>
        <Bookmark $w={240}>
          <ImportIcon />
          Importer les marque-...
        </Bookmark>
        <Bookmark $w={211}>
          <Firefox size={24} id="f2" />
          Débuter avec Firefox
        </Bookmark>
        <Bookmark $w={240}>
          <YouTube />
          (6) COURS COMPLET ...
        </Bookmark>
      </BookmarkBar>

      <Decoration />
      <AppBody>
        <Sidebar>
          <SideTitle>Configuration</SideTitle>
          <Select label="Select mode" value="Individual Dashbo…" w={186} after={0} />
          <SideSubtitle>Theme Settings</SideSubtitle>
          <Select label="Choose a theme" value="Neon Cyberpunk" w={151} />
          <DateField label="Start date:" value="2024/08/18" />
          <DateField label="End date:" value="2025/08/18" after={19} />
          <Select label="Category" value="Technology" w={110} />
          <Select label="Ticker" value="AAPL" w={58} />
        </Sidebar>
        <Main>
          <AppHeader>
            <HeaderButton $w={83} $h={38}>
              Deploy
            </HeaderButton>
            <HeaderButton $w={54} $h={46} $icon>
              <svg width="24" height="24" viewBox="0 0 24 24">
                <rect x=".5" y=".5" width="23" height="23" fill="none" stroke="#009ca0" />
                <circle cx="12" cy="6" r="2.400" fill={CYAN} />
                <circle cx="12" cy="12" r="2.400" fill={CYAN} />
                <circle cx="12" cy="18" r="2.400" fill={CYAN} />
              </svg>
            </HeaderButton>
          </AppHeader>
          <Block>
            <TabList>
              {appTabs.map(([icon, name, w], i) => (
                <AppTab key={name} $w={w} $active={i === 0}>
                  <TabIcon kind={icon} />
                  {name}
                </AppTab>
              ))}
            </TabList>
            <Panel>
              <PanelTitle>Price evolution with moving averages</PanelTitle>
              <Chart />
            </Panel>
          </Block>
        </Main>
      </AppBody>

      <Taskbar>
        <TaskSlot $w={84}>
          <Widgets />
        </TaskSlot>
        <TaskSlot $w={382} />
        <TaskSlot $w={57}>
          <WindowsLogo />
        </TaskSlot>
        <Search>
          <Line w={22} h={24} c="#1d1d1d" s={2.600}>
            <circle cx="13" cy="9" r="8" />
            <path d="M7 15L1.500 21.500" />
          </Line>
          Rechercher
        </Search>
        <TaskSlot $w={65}>
          <TaskView />
        </TaskSlot>
        <TaskSlot $w={66}>
          <Folder />
          <Indicator />
        </TaskSlot>
        <TaskSlot $w={66} $top={7}>
          <ActiveTile>
            <Firefox size={36} id="f3" />
            <Indicator $active />
          </ActiveTile>
        </TaskSlot>
        <TaskSlot $w={66}>
          <Private />
        </TaskSlot>
        <TaskSlot $w={66} />
        <TaskSlot $w={66}>
          <Chrome />
          <Indicator />
        </TaskSlot>
        <TaskSlot $w={66}>
          <GitHubDesktop />
          <Indicator />
        </TaskSlot>
        <TaskSlot $w={66}>
          <VSCode />
          <Indicator />
        </TaskSlot>
        <Tray>
          <Line w={18} h={11} c="#1a1a1a" s={1.600}>
            <path d="M1 10l8-8.500L17 10" />
          </Line>
          <Line w={26} h={26} c="#1a1a1a" s={1.600}>
            <path d="M2 12A11 11 0 0 1 21 5.500M22 1v6h-6M12 24A11 11 0 0 1 3 18.500M1.500 23v-6h6" />
            <circle cx="19.500" cy="19" r="6.500" fill="#ff9a0a" stroke="none" />
          </Line>
          <WifiSlot>
            <Line w={24} h={18} c="#1a1a1a" s={1.900}>
              <path d="M1 6a16 16 0 0 1 22 0M4.500 9.800a11 11 0 0 1 15 0M8 13.300a6 6 0 0 1 8 0" />
              <circle cx="12" cy="16.500" r="1.200" fill="#1a1a1a" />
            </Line>
          </WifiSlot>
          <Line w={24} h={19} c="#1a1a1a" s={1.600}>
            <path d="M1 6.500h3.500L10 1.500v16L4.500 12.500H1zM13.500 6a5 5 0 0 1 0 7M16.500 3.500a9 9 0 0 1 0 12" />
            <path d="M19.500 1.500a12 12 0 0 1 0 16" stroke="#aaa" />
          </Line>
          <Line w={25} h={16} c="#1a1a1a" s={1.800}>
            <rect x="1" y="1" width="20" height="14" rx="3" />
            <path d="M23.500 6v4" />
            <rect x="4.500" y="4.500" width="5" height="7" fill="#1a1a1a" />
          </Line>
          <Clock>
            22:18
            <br />
            18/08/2025
          </Clock>
          <Notice>1</Notice>
        </Tray>
      </Taskbar>
    </Screen>
  );
}
